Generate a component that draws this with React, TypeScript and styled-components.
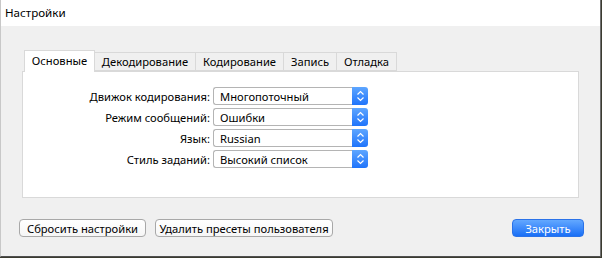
import styled, { createGlobalStyle } from "styled-components";

const GlobalStyle = createGlobalStyle`
  html, body {
    margin: 0;
    padding: 0;
    background: #3b3b30;
  }
  * {
    box-sizing: border-box;
  }
`;

const tabs = [
  { name: "Основные", width: 71 },
  { name: "Декодирование", width: 102 },
  { name: "Кодирование", width: 89 },
  { name: "Запись", width: 54 },
  { name: "Отладка", width: 61 },
];

const fields = [
  { label: "Движок кодирования:", value: "Многопоточный" },
  { label: "Режим сообщений:", value: "Ошибки" },
  { label: "Язык:", value: "Russian" },
  { label: "Стиль заданий:", value: "Высокий список" },
];

export default function App() {
  return (
    <>
      <GlobalStyle />
      <Window>
        <TitleBar>Настройки</TitleBar>
        <Body>
          <TabRow>
            {tabs.map((t, i) => (
              <Tab key={t.name} $active={i === 0} $width={t.width}>
                {t.name}
              </Tab>
            ))}
          </TabRow>
          <Panel>
            <Form>
              {fields.map((f) => (
                <Row key={f.label}>
                  <Label>{f.label}</Label>
                  <Select>
                    <SelectValue>{f.value}</SelectValue>
                    <Stepper>
                      <svg width="9" height="12" viewBox="0 0 9 12">
                        <path
                          d="M1.5 4.5 L4.5 1.5 L7.5 4.5 M1.5 7.5 L4.5 10.5 L7.5 7.5"
                          fill="none"
                          stroke="#fff"
                          strokeWidth="1.2"
                        />
                      </svg>
                    </Stepper>
                  </Select>
                </Row>
              ))}
            </Form>
          </Panel>
          <Footer>
            <LeftButtons>
              <Button $width={127}>Сбросить настройки</Button>
              <Button $width={178}>Удалить пресеты пользователя</Button>
            </LeftButtons>
            <Button $width={72} $primary>
              Закрыть
            </Button>
          </Footer>
        </Body>
      </Window>
    </>
  );
}

const Window = styled.div`
  width: 601px;
  height: 257px;
  background: #f0f0f0;
  border-left: 1px solid #c8c8c8;
  border-right: 1px solid #707070;
  border-bottom: 1px solid #505050;
  display: flex;
  flex-direction: column;
  font-family: "Noto Sans", "Liberation Sans", sans-serif;
  font-size: 11.2px;
  color: #000;
`;

const TitleBar = styled.div`
  height: 26px;
  background: #fff;
  padding: 5px 0 0 4px;
  font-size: 11.6px;
  line-height: 16px;
`;

const Body = styled.div`
  flex: 1;
  padding: 24px 0 0 21px;
  display: flex;
  flex-direction: column;
`;

const TabRow = styled.div`
  display: flex;
  align-items: flex-end;
  padding-left: 3px;
  height: 21px;
  position: relative;
  z-index: 1;
`;

const Tab = styled.div<{ $active?: boolean; $width: number }>`
  width: ${(p) => p.$width}px;
  height: ${(p) => (p.$active ? "22px" : "19px")};
  margin-bottom: ${(p) => (p.$active ? "-1px" : "0")};
  padding: ${(p) => (p.$active ? "0 0 3px" : "0")};
  display: flex;
  align-items: center;
  justify-content: center;
  background: ${(p) => (p.$active ? "#fff" : "#f0f0f0")};
  border: 1px solid #d9d9d9;
  border-bottom: ${(p) => (p.$active ? "none" : "1px solid #d9d9d9")};
  margin-left: -1px;
  white-space: nowrap;
`;

const Panel = styled.div`
  width: 557px;
  height: 127px;
  background: #fff;
  border: 1px solid #d9d9d9;
  padding: 15px 0 0 0;
`;

const Form = styled.div`
  display: flex;
  flex-direction: column;
  gap: 3px;
`;

const Row = styled.div`
  display: grid;
  grid-template-columns: 187px 155px;
  column-gap: 3px;
  align-items: center;
`;

const Label = styled.div`
  text-align: right;
`;

const Select = styled.div`
  height: 18px;
  display: flex;
`;

const SelectValue = styled.div`
  flex: 1;
  border: 1px solid #b4b4b4;
  border-right: none;
  border-radius: 3px 0 0 3px;
  padding-left: 6px;
  display: flex;
  align-items: center;
  background: #fff;
`;

const Stepper = styled.div`
  width: 16px;
  border-radius: 0 3px 3px 0;
  background: linear-gradient(#5ea6ff, #1f74fb);
  display: flex;
  align-items: center;
  justify-content: center;
`;

const Footer = styled.div`
  margin-top: 21px;
  display: flex;
  justify-content: space-between;
  margin-left: -3px;
  width: 565px;
`;

const LeftButtons = styled.div`
  display: flex;
  gap: 9px;
`;

const Button = styled.div<{ $width: number; $primary?: boolean }>`
  width: ${(p) => p.$width}px;
  height: 18px;
  border-radius: 4px;
  display: flex;
  align-items: center;
  justify-content: center;
  white-space: nowrap;
  border: 1px solid ${(p) => (p.$primary ? "#2a72e8" : "#a8a8a8")};
  background: ${(p) =>
    p.$primary ? "linear-gradient(#63a8ff, #1a6ff6)" : "linear-gradient(#fff, #f6f6f6)"};
  color: ${(p) => (p.$primary ? "#fff" : "#000")};
`;
